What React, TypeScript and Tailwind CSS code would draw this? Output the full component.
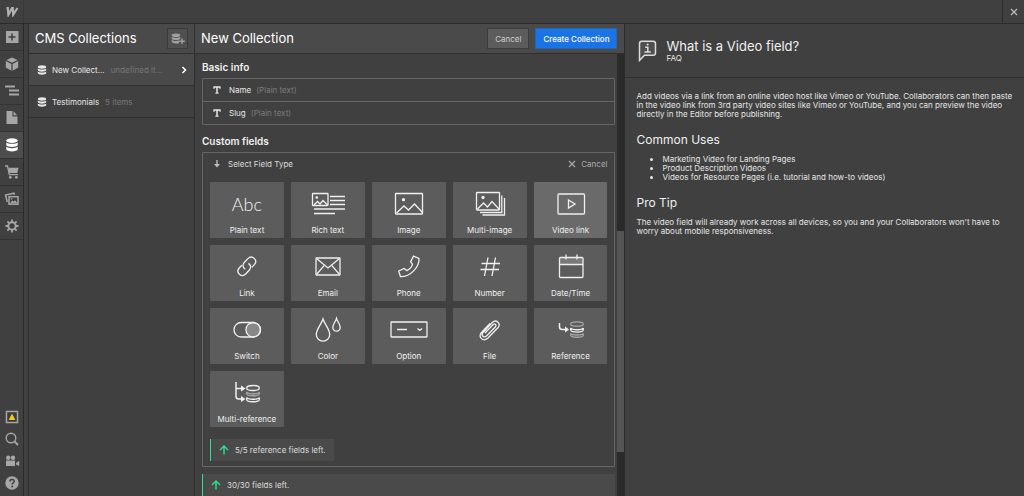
import type { ReactNode } from "react";
import clsx from "clsx";

interface FieldType {
  label: string;
  icon: ReactNode;
  active?: boolean;
}

// Rail icons, 16x16
const railIcons: { name: string; icon: ReactNode; active?: boolean }[] = [
  {
    name: "Add",
    icon: (
      <>
        <rect x="2" y="2" width="12.500" height="12" fill="currentColor" />
        <path d="M8 4.500v7M4.500 8h7" stroke="#404040" strokeWidth="1.500" />
      </>
    ),
  },
  {
    name: "Symbols",
    icon: (
      <>
        <path d="M8 1.500 13.500 4 8 6.800 2.500 4Z" fill="currentColor" />
        <path d="M1.800 5 7.400 7.900v6.800L1.800 11.600Z" fill="currentColor" />
        <path d="M14.200 5 8.600 7.900v6.800l5.600-3.100Z" fill="currentColor" />
      </>
    ),
  },
  {
    name: "Navigator",
    icon: <path d="M1 3.500h10M5 7.500h10M5 11.500h10" stroke="currentColor" strokeWidth="2" />,
  },
  {
    name: "Pages",
    icon: (
      <>
        <path d="M2.500 1H8.500v5.500h5v7.500H2.500Z" fill="currentColor" />
        <path d="M9.500 1.300 13.200 5.300H9.500Z" fill="currentColor" />
      </>
    ),
  },
  {
    name: "CMS",
    active: true,
    icon: (
      <>
        <ellipse cx="8" cy="3.600" rx="5.700" ry="2.400" fill="currentColor" />
        <path d="M2.300 5.400c1.500 1.900 9.900 1.900 11.400 0v2.900c-.5 2.300-10.900 2.300-11.400 0Z" fill="currentColor" />
        <path d="M2.300 9.700c1.500 1.900 9.900 1.900 11.400 0v2.900c-.5 2.400-10.900 2.400-11.400 0Z" fill="currentColor" />
      </>
    ),
  },
  {
    name: "Ecommerce",
    icon: (
      <>
        <path d="M1 2h2.500L5.300 10.700H14" fill="none" stroke="currentColor" strokeWidth="1.300" />
        <path d="M4.300 3.800H14.500L13.300 9H5.300Z" fill="currentColor" />
        <circle cx="6.300" cy="13.300" r="1.400" fill="currentColor" />
        <circle cx="12.300" cy="13.300" r="1.400" fill="currentColor" />
      </>
    ),
  },
  {
    name: "Assets",
    icon: (
      <>
        <path d="M3.300 11 1.500 4 10 2.200l.4 1.700" fill="none" stroke="currentColor" strokeWidth="1.500" />
        <rect x="5" y="5.700" width="9" height="7.500" fill="none" stroke="currentColor" strokeWidth="1.500" />
        <path d="M6 12.300 8.300 9.500l1.400 1.300L11 9.300l2.500 3Z" fill="currentColor" />
        <circle cx="7.500" cy="8" r=".8" fill="currentColor" />
      </>
    ),
  },
  {
    name: "Settings",
    icon: (
      <>
        <circle cx="8" cy="8" r="3.700" fill="none" stroke="currentColor" strokeWidth="2" />
        <path
          d="M8 1.500v2.500M8 12v2.500M1.500 8H4M12 8h2.500M3.400 3.400l1.700 1.700M10.900 10.900l1.700 1.700M3.400 12.600l1.700-1.700M10.900 5.100l1.700-1.700"
          stroke="currentColor"
          strokeWidth="1.800"
        />
      </>
    ),
  },
];

const helpIcons: { name: string; icon: ReactNode }[] = [
  {
    name: "Audit",
    icon: (
      <>
        <rect x="2.500" y="2.500" width="11" height="11" fill="#3a3a3a" stroke="currentColor" strokeWidth="1.500" />
        <path d="M8 5.500 10.700 10.500H5.300Z" fill="#f7c325" stroke="#f7c325" strokeWidth="1" strokeLinejoin="round" />
      </>
    ),
  },
  {
    name: "Search",
    icon: (
      <>
        <circle cx="7" cy="7" r="4.800" fill="none" stroke="currentColor" strokeWidth="1.400" />
        <path d="m10.500 10.500 3.500 3.500" stroke="currentColor" strokeWidth="1.800" />
      </>
    ),
  },
  {
    name: "Video tutorials",
    icon: (
      <>
        <circle cx="4.200" cy="4.700" r="2.200" fill="currentColor" />
        <circle cx="9" cy="4.700" r="2.200" fill="currentColor" />
        <path d="M2 7.500h9v5.500H2ZM12 10l3.200-2.300v5.300L12 11.500Z" fill="currentColor" />
      </>
    ),
  },
  {
    name: "Help",
    icon: (
      <>
        <circle cx="8" cy="8" r="6.700" fill="currentColor" />
        <path d="M5.900 6.500c0-2.800 4.300-2.700 4.300-.2 0 1.500-2.100 1.500-2.100 3.100" fill="none" stroke="#404040" strokeWidth="1.500" />
        <circle cx="8.100" cy="11.500" r="1" fill="#404040" />
      </>
    ),
  },
];

// Field tiles, icons drawn on a 40x28 grid
const fieldTypes: FieldType[] = [
  { label: "Plain text", icon: null },
  {
    label: "Rich text",
    icon: (
      <>
        <rect x="4.500" y="3.500" width="15.500" height="12" rx=".5" />
        <path d="m6 15 3.500-3.500 2.500 2.500 3-3.500 4.500 4.500M22 6.500h15M22 10.500h15M22 14.500h15M6 19h31M6 23.500h21" />
        <circle cx="8.800" cy="7.500" r=".7" fill="currentColor" />
      </>
    ),
  },
  {
    label: "Image",
    icon: (
      <>
        <rect x="6.500" y="3.500" width="27" height="20.500" rx=".5" />
        <path d="m7.500 23 7.500-7 4.500 4 6-6 8 8.500" />
        <circle cx="14.500" cy="9.700" r="1" fill="currentColor" />
      </>
    ),
  },
  {
    label: "Multi-image",
    icon: (
      <>
        <rect x="6.500" y="2.500" width="23" height="17.500" rx=".5" />
        <path d="m7.500 19 6-6 4 4 4.500-5.500 7 7.500M31.800 5.500v17H10M34.500 8v17H12.500" />
        <circle cx="13" cy="7.500" r="1" fill="currentColor" />
      </>
    ),
  },
  {
    label: "Video link",
    active: true,
    icon: (
      <>
        <rect x="7" y="4" width="26.500" height="20" rx="1" />
        <path d="m17.500 10 6.500 4-6.500 4Z" />
      </>
    ),
  },
  {
    label: "Link",
    icon: (
      <>
        <path d="M18.200 16.200c-2.500-1.600-2.900-4.400-1.200-6.400l3.900-4.200c1.900-1.800 4.500-1.900 6.300-.2s1.900 4.300.2 6.200l-2.600 2.800" />
        <path d="M21.400 10.400c2.500 1.600 2.900 4.400 1.200 6.400l-3.900 4.200c-1.900 1.800-4.500 1.900-6.300.2s-1.900-4.300-.2-6.200l2.600-2.800" />
      </>
    ),
  },
  {
    label: "Email",
    icon: (
      <>
        <rect x="8" y="5" width="24" height="17" rx=".5" />
        <path d="m8.500 5.500 11.500 9.500 11.500-9.500M8.500 21.500l8-9.300M31.500 21.500l-8-9.300" />
      </>
    ),
  },
  {
    label: "Phone",
    icon: (
      <path d="M24.500 3.200 30 5.500c.4 8.500-8.500 18.500-18.500 18.200L9.700 18l5.400-2.600 2.700 2.200c2.500-1.100 4.900-3.800 5.700-6.200l-1.900-2.700Z" />
    ),
  },
  {
    label: "Number",
    icon: <path d="M18 4.500 14.500 23M25.500 4.500 22 23M11.500 10.500h18.500M10.500 16.500h18.500" />,
  },
  {
    label: "Date/Time",
    icon: (
      <>
        <rect x="8.500" y="4.500" width="23.500" height="20" rx="1" />
        <path d="M8.500 11.500h23.500M15 1.500v5M26 1.500v5" />
        <path d="M9 4.500h22.500v6.500H9Z" fill="currentColor" fillOpacity=".2" stroke="none" />
      </>
    ),
  },
  {
    label: "Switch",
    icon: (
      <>
        <rect x="7" y="6.500" width="26.500" height="14.500" rx="7.250" />
        <circle cx="26.200" cy="13.750" r="7.250" fill="currentColor" fillOpacity=".3" />
      </>
    ),
  },
  {
    label: "Color",
    icon: (
      <>
        <path d="M15 3c1.500 5 6.700 10 6.700 15.500a6.700 6.700 0 0 1-13.400 0C8.300 13 13.500 8 15 3Z" />
        <path d="M28.500 2.500c.8 3 3.700 5.500 3.700 9a3.700 3.700 0 0 1-7.400 0c0-3.500 2.900-6 3.700-9Z" />
      </>
    ),
  },
  {
    label: "Option",
    icon: (
      <>
        <rect x="2" y="6" width="36" height="15" rx=".5" />
        <path d="M8 13.500h10M28.500 12.500l2.300 2 2.300-2" />
      </>
    ),
  },
  {
    label: "File",
    icon: (
      <path d="m15 17 8.200-8.500c1.700-1.500 3.700.5 2.300 2.200L16.500 20c-2.600 2.400-5.700-.8-3.600-3.300L22.200 6.500c4.200-3.700 9.200 1.200 5.700 5.300L17.700 22.300c-4.700 4-9.900-1.200-6.200-5.900l8.500-9" />
    ),
  },
  {
    label: "Reference",
    icon: (
      <>
        <path d="M8.500 7v4c0 2 1 2.500 3 2.500h4" strokeWidth="1.500" />
        <path d="m14 10.500 4 3-4 3Z" fill="currentColor" stroke="none" />
        <g opacity=".5">
          <ellipse cx="26" cy="8" rx="6.300" ry="2.200" />
          <path d="M19.700 17.500v1.500c0 3 12.600 3 12.600 0v-1.500c-1 2-11.600 2-12.600 0Z" />
        </g>
        <path d="M19.700 12v1.800c0 3 12.600 3 12.600 0V12c-1 2.300-11.600 2.300-12.600 0Z" />
      </>
    ),
  },
  {
    label: "Multi-reference",
    icon: (
      <>
        <path d="M9 3v14.500c0 2 1 2.500 3 2.500h3M9 9.500h6" strokeWidth="1.500" />
        <path d="m14 6.500 4.500 3-4.500 3ZM14 17l4.500 3-4.500 3Z" fill="currentColor" stroke="none" />
        <ellipse cx="26" cy="9" rx="6.300" ry="2.500" />
        <path d="M19.700 13v1.500c0 3 12.600 3 12.600 0V13c-1 2.300-11.600 2.300-12.600 0Z" opacity=".5" />
        <path d="M19.700 18.500v2c0 3 12.600 3 12.600 0v-2c-1 2.300-11.600 2.300-12.600 0Z" />
      </>
    ),
  },
];

const collections = [
  { name: "New Collect...", count: "undefined it...", active: true },
  { name: "Testimonials", count: "5 items", active: false },
];

const basicFields = ["Name", "Slug"];

const commonUses = [
  "Marketing Video for Landing Pages",
  "Product Description Videos",
  "Videos for Resource Pages (i.e. tutorial and how-to videos)",
];

function StackIcon() {
  return (
    <svg viewBox="0 0 10 10" className="size-[10px] shrink-0" fill="currentColor" aria-hidden="true">
      <ellipse cx="5" cy="2" rx="4.200" ry="1.700" />
      <path d="M.8 3.500c1 1.400 7.400 1.400 8.400 0v1.800c-.4 1.800-8 1.800-8.400 0ZM.8 6.500c1 1.400 7.400 1.400 8.400 0v1.800c-.4 1.900-8 1.900-8.400 0Z" />
    </svg>
  );
}

function CloseIcon() {
  return (
    <svg viewBox="0 0 8 8" className="size-2" stroke="currentColor" strokeWidth="1.200" aria-hidden="true">
      <path d="m1 1 6 6M7 1 1 7" />
    </svg>
  );
}

function LimitNote({ children, wide }: { children: ReactNode; wide?: boolean }) {
  return (
    <div
      className={clsx(
        "flex h-[22px] items-center gap-[6px] border-l border-[#2ae28c] bg-[#4a4a4a] px-2 text-[#dcdcdc]",
        wide ? "w-full" : "w-fit"
      )}
    >
      <svg viewBox="0 0 10 10" className="size-[10px]" fill="none" stroke="#2ae28c" strokeWidth="1.400" aria-hidden="true">
        <path d="M5 9.500V1.200M1 5l4-4 4 4" />
      </svg>
      <span>{children}</span>
    </div>
  );
}

function FieldTile({ label, icon, active }: FieldType) {
  return (
    <button
      className={clsx(
        "flex h-14 flex-col items-center rounded-[1px] pt-2 text-[#f0f0f0]",
        active ? "bg-[#6a6a6a]" : "bg-[#5c5c5c] hover:bg-[#6a6a6a]"
      )}
    >
      {icon ? (
        <svg viewBox="0 0 40 28" className="h-7 w-10" fill="none" stroke="currentColor" strokeWidth="1.300" aria-hidden="true">
          {icon}
        </svg>
      ) : (
        <span className="h-7 font-[Lato,sans-serif] text-lg font-light leading-7">Abc</span>
      )}
      <span className="mt-[6px] leading-3">{label}</span>
    </button>
  );
}

function Rail() {
  return (
    <nav className="flex w-6 shrink-0 flex-col border-r border-[#2b2b2b] text-[#a6a6a6]">
      {railIcons.map(({ name, icon, active }) => (
        <button
          key={name}
          aria-label={name}
          className={clsx(
            "flex h-[27px] shrink-0 items-center justify-center border-b border-[#333]",
            active && "bg-[#4d4d4d] text-white"
          )}
        >
          <svg viewBox="0 0 16 16" className="size-4">
            {icon}
          </svg>
        </button>
      ))}
      <div className="mt-auto flex flex-col gap-[6px] pb-[5px]">
        {helpIcons.map(({ name, icon }) => (
          <button key={name} aria-label={name} className="flex justify-center">
            <svg viewBox="0 0 16 16" className="size-4">
              {icon}
            </svg>
          </button>
        ))}
      </div>
    </nav>
  );
}

function CollectionsPanel() {
  return (
    <section className="ml-1 flex w-[167px] shrink-0 flex-col border-x border-[#2f2f2f]">
      <header className="flex h-[30px] items-center justify-between border-b border-[#2f2f2f] bg-[#4a4a4a] px-[6px]">
        <h2 className="text-[13px] text-white">CMS Collections</h2>
        <button
          aria-label="Add collection"
          className="flex size-[21px] items-center justify-center border border-[#3a3a3a] bg-[#505050] text-[#a0a0a0]"
        >
          <svg viewBox="0 0 14 12" className="h-3 w-[14px]" fill="currentColor">
            <ellipse cx="5" cy="2.300" rx="4.300" ry="1.800" />
            <path d="M.7 3.800c1 1.400 7.600 1.400 8.600 0v1.900c-.4 1.800-8.200 1.800-8.600 0ZM.7 6.800c1 1.400 5.500 1.600 7.300.8v2.600c-3 .6-7 .2-7.300-1.600Z" />
            <path d="M11 5.500v5.500M8.300 8.200h5.500" stroke="currentColor" strokeWidth="1.400" />
          </svg>
        </button>
      </header>
      {collections.map(({ name, count, active }) => (
        <button
          key={name}
          className={clsx(
            "flex h-8 items-center border-b border-[#2f2f2f] pl-2 pr-[6px] text-[#e8e8e8]",
            active && "bg-[#4a4a4a]"
          )}
        >
          <StackIcon />
          <span className="ml-[5px]">{name}</span>
          <span className="ml-[6px] text-[#777]">{count}</span>
          {active && (
            <svg viewBox="0 0 8 8" className="ml-auto size-2" fill="none" stroke="white" strokeWidth="1.500" aria-hidden="true">
              <path d="m2.500 1 3 3-3 3" />
            </svg>
          )}
        </button>
      ))}
    </section>
  );
}

function NewCollection() {
  return (
    <main className="flex min-w-0 flex-[430] flex-col border-r border-[#2b2b2b]">
      <header className="flex h-[30px] shrink-0 items-center border-b border-[#2f2f2f] bg-[#4a4a4a] pl-[6px] pr-[7px]">
        <h1 className="text-[13px] text-white">New Collection</h1>
        <button className="ml-auto h-[21px] border border-[#3c3c3c] bg-[#5c5c5c] px-[7px] text-[#d0d0d0]">Cancel</button>
        <button className="ml-[6px] h-[21px] border border-[#2366b8] bg-[#1b74e4] px-[7px] font-medium text-white">
          Create Collection
        </button>
      </header>
      <div className="flex min-h-0 flex-1">
        <div className="flex min-w-0 flex-1 flex-col overflow-hidden pl-[7px] pr-[2px] pt-[7px]">
          <h3 className="text-[10px] font-semibold leading-3 text-[#f0f0f0]">Basic info</h3>
          <ul className="mt-[5px] shrink-0 rounded-[1px] border border-[#666]">
            {basicFields.map((field) => (
              <li key={field} className="flex h-[23px] items-center border-t border-[#666] pl-[10px] first:h-[22px] first:border-t-0">
                <svg viewBox="0 0 8 8" className="size-2" fill="none" stroke="#e8e8e8" aria-hidden="true">
                  <path d="M.5 1h7M4 1v6" strokeWidth="1.500" />
                  <path d="M1 1v2M7 1v2M2.300 7.200h3.400" />
                </svg>
                <span className="ml-2 text-[#e8e8e8]">{field}</span>
                <span className="ml-[5px] text-[#7c7c7c]">(Plain text)</span>
              </li>
            ))}
          </ul>
          <h3 className="mt-[10px] text-[10px] font-semibold leading-3 text-[#f0f0f0]">Custom fields</h3>
          <div className="mt-[5px] shrink-0 rounded-[1px] border border-[#666] px-[7px] pb-[5px]">
            <div className="flex h-[22px] items-center pl-[2px]">
              <svg viewBox="0 0 10 10" className="size-[10px]" fill="none" stroke="#bdbdbd" aria-hidden="true">
                <path d="M5 1v5" strokeWidth="1.400" />
                <path d="m2 5 3 3.500L8 5Z" fill="#bdbdbd" stroke="none" />
              </svg>
              <span className="ml-[6px] text-[#dcdcdc]">Select Field Type</span>
              <button className="ml-auto flex items-center gap-[5px] text-[#aaa]">
                <CloseIcon />
                Cancel
              </button>
            </div>
            <div className="mt-[7px] grid grid-cols-5 gap-[7px]">
              {fieldTypes.map((type) => (
                <FieldTile key={type.label} {...type} />
              ))}
            </div>
            <div className="mt-3">
              <LimitNote>5/5 reference fields left.</LimitNote>
            </div>
          </div>
          <div className="mt-[7px]">
            <LimitNote wide>30/30 fields left.</LimitNote>
          </div>
        </div>
        {/* scroll track */}
        <div className="flex w-[7px] shrink-0 flex-col bg-[#2a2a2a]">
          <div className="h-[40%]" />
          <div className="h-1/2 bg-[#555]" />
        </div>
      </div>
    </main>
  );
}

function HelpPanel() {
  return (
    <aside className="min-w-0 flex-[399] text-[#e6e6e6]">
      <header className="flex h-[54px] items-center gap-2 border-b border-[#2f2f2f] pl-[13px]">
        <svg viewBox="0 0 20 24" className="h-6 w-5" fill="none" stroke="#dcdcdc" strokeWidth="1.500" aria-hidden="true">
          <path d="M1.500 21.500V4.500c0-1.500.8-2.300 2.300-2.300h11.400c1.500 0 2.300.8 2.300 2.300v9.500c0 1.500-.8 2.300-2.300 2.300H6.500Z" fill="#4f4f4f" />
          <path d="M7.200 8.200h2.600v4.600M6.500 13h6.300" />
          <circle cx="9.600" cy="5.500" r="1" fill="#dcdcdc" stroke="none" />
        </svg>
        <div>
          <h2 className="text-[13px] leading-4 text-[#f0f0f0]">What is a Video field?</h2>
          <p className="leading-[9px]">FAQ</p>
        </div>
      </header>
      <div className="px-[11px] pt-[14px] leading-[9px]">
        <p>
          Add videos via a link from an online video host like Vimeo or YouTube. Collaborators can then paste in the
          video link from 3rd party video sites like Vimeo or YouTube, and you can preview the video directly in the
          Editor before publishing.
        </p>
        <h3 className="mt-[13px] text-xs leading-4 text-[#f0f0f0]">Common Uses</h3>
        <ul className="mt-[7px] list-disc pl-[26px]">
          {commonUses.map((use) => (
            <li key={use}>{use}</li>
          ))}
        </ul>
        <h3 className="mt-[13px] text-xs leading-4 text-[#f0f0f0]">Pro Tip</h3>
        <p className="mt-[7px]">
          The video field will already work across all devices, so you and your Collaborators won't have to worry about
          mobile responsiveness.
        </p>
      </div>
    </aside>
  );
}

export default function App() {
  return (
    <div className="flex h-screen flex-col overflow-hidden bg-[#404040] font-[Inter,sans-serif] text-[8px]">
      <div className="flex h-6 shrink-0 justify-between border-b border-[#2b2b2b]">
        <a href="#" aria-label="Dashboard" className="flex w-6 items-center justify-center border-r border-[#383838] text-[#b0b0b0]">
          <svg viewBox="0 0 14 10" className="h-[10px] w-[14px]" fill="none" stroke="currentColor" strokeWidth="2.200" aria-hidden="true">
            <path d="M1.500 1.200h1.300l.6 6.500L7 1.200h.8l.4 6.500L12.500 1" />
          </svg>
        </a>
        <button aria-label="Close" className="flex w-[22px] items-center justify-center border-l border-[#2b2b2b] text-[#bdbdbd]">
          <CloseIcon />
        </button>
      </div>
      <div className="flex min-h-0 flex-1">
        <Rail />
        <CollectionsPanel />
        <NewCollection />
        <HelpPanel />
      </div>
    </div>
  );
}
